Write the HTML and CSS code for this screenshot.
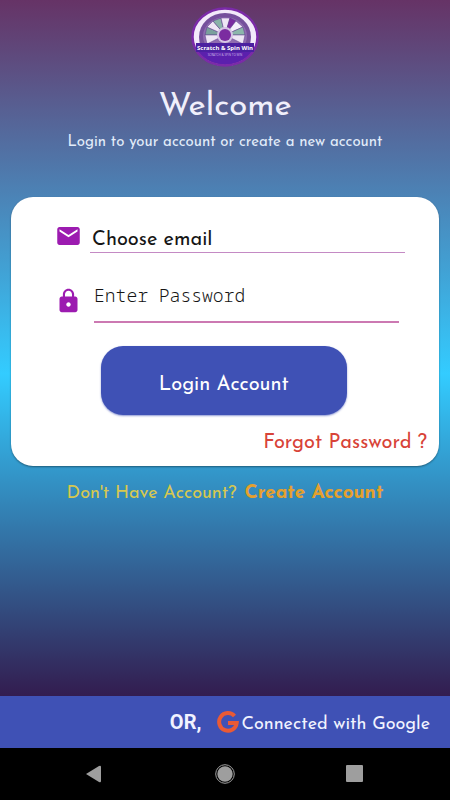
FILE: index.html
```html
<!DOCTYPE html>
<html lang="en">
<head>
<meta charset="utf-8">
<meta name="viewport" content="width=device-width, initial-scale=1">
<title>Scratch &amp; Spin Win</title>
<link rel="stylesheet" href="styles.css">
</head>
<body>
<div class="screen">
  <main class="content">
    <header class="intro">
      <svg class="logo" viewBox="0 0 68 60" role="img" aria-label="Scratch &amp; Spin Win">
        <defs><clipPath id="badge"><ellipse cx="34" cy="30" rx="32" ry="28"/></clipPath></defs>
        <ellipse cx="34" cy="30" rx="33" ry="29" fill="#f2eafa"/>
        <ellipse cx="34" cy="30" rx="26" ry="24" fill="#75509c"/>
        <ellipse cx="34" cy="29" rx="22" ry="19" fill="#8f6cb0"/>
        <g stroke="#5d3b8c" stroke-width=".5">
          <path d="M34 28 14 28 16 20Z" fill="#7aa09c"/>
          <path d="M34 28 16 20 22 14Z" fill="#eee6f5"/>
          <path d="M34 28 22 14 30 11Z" fill="#89b3a8"/>
          <path d="M34 28 30 11 39 11Z" fill="#eee6f5"/>
          <path d="M34 28 39 11 45 14Z" fill="#7b2ca0"/>
          <path d="M34 28 45 14 52 20Z" fill="#f5effa"/>
          <path d="M34 28 52 20 54 28Z" fill="#8cb6ab"/>
          <path d="M34 28 54 28 52 37Z" fill="#eee6f5"/>
          <path d="M34 28 14 28 16 37Z" fill="#eee6f5"/>
        </g>
        <circle cx="34" cy="28" r="8" fill="#d5c4e5"/>
        <circle cx="34" cy="28" r="6" fill="#7b2ca0"/>
        <path d="M5 36H63V45H5Z" fill="#4b20a0"/>
        <path d="M5 45H63L48 60H20Z" fill="#5b20ad" clip-path="url(#badge)"/>
        <ellipse cx="34" cy="30" rx="32.500" ry="28.500" fill="none" stroke="#7b2aa8" stroke-width="2.500"/>
        <path d="M5 36H63V45H5Z" fill="#4b20a0"/>
        <text class="logo-name" x="34" y="43" text-anchor="middle">Scratch &amp; Spin Win</text>
        <text class="logo-tagline" x="34" y="49" text-anchor="middle">SCRATCH &amp; SPIN TO WIN</text>
      </svg>
      <h1 class="title">Welcome</h1>
      <p class="subtitle">Login to your account or create a new account</p>
    </header>
    <form class="card">
      <div class="field">
        <label for="email" aria-label="Email"><svg class="icon" viewBox="0 0 24 24"><path d="M20 4H4c-1.100 0-2 .9-2 2v12c0 1.100.9 2 2 2h16c1.100 0 2-.9 2-2V6c0-1.100-.9-2-2-2zm0 4-8 5-8-5V6l8 5 8-5v2z"/></svg></label>
        <input class="input" id="email" type="email" placeholder="Choose email">
      </div>
      <div class="field field-password">
        <label for="password" aria-label="Password"><svg class="icon icon-lock" viewBox="0 0 24 24"><path d="M18 8h-1V6c0-2.760-2.240-5-5-5S7 3.240 7 6v2H6c-1.100 0-2 .9-2 2v10c0 1.100.9 2 2 2h12c1.100 0 2-.9 2-2V10c0-1.100-.9-2-2-2zm-6 9c-1.100 0-2-.9-2-2s.9-2 2-2 2 .9 2 2-.9 2-2 2zm3.100-9H8.900V6c0-1.710 1.390-3.100 3.100-3.100s3.100 1.390 3.100 3.100v2z"/></svg></label>
        <input class="input input-password" id="password" type="password" placeholder="Enter Password">
      </div>
      <button class="login" type="submit">Login Account</button>
      <a class="forgot" href="#">Forgot Password ?</a>
    </form>
    <p class="signup">Don't Have Account? <a class="create" href="#">Create Account</a></p>
  </main>
  <div class="social">
    <span class="or">OR,</span>
    <a class="google" href="#"><svg class="google-icon" viewBox="0 0 22 22"><path d="M17.500 5A8.800 8.800 0 1 0 19.700 12H11" fill="none" stroke="#ea5a35" stroke-width="4"/></svg><span class="google-label">Connected with Google</span></a>
  </div>
  <nav class="system">
    <button class="key" aria-label="Back"><svg viewBox="0 0 20 20"><path d="M1 10 14 2Q16 1 16 3V17Q16 19 14 18Z"/></svg></button>
    <button class="key" aria-label="Home"><svg viewBox="0 0 20 20"><circle cx="10" cy="10" r="7.700"/><circle cx="10" cy="10" r="9.300" fill="none" stroke="#9e9e9e"/></svg></button>
    <button class="key" aria-label="Recent apps"><svg viewBox="0 0 20 20"><rect x="1" y="1" width="17" height="17" rx="1"/></svg></button>
  </nav>
</div>
</body>
</html>
```
FILE: styles.css
```css
* { box-sizing: border-box; }

body {
  margin: 0;
  font-family: "Josefin Sans", Lato, sans-serif;
  background: #000;
}

a { text-decoration: none; }

button {
  border: 0;
  font-family: inherit;
}

.screen {
  display: flex;
  flex-direction: column;
  min-height: 100vh;
  background: linear-gradient(#663366, #33ccff 50%, #330033) 0 0 / 100% calc(100% - 52px) no-repeat #000;
}

.content {
  flex: 1;
  padding: 7px 11px 0;
}

.intro {
  display: flex;
  flex-direction: column;
  align-items: center;
  height: 190px;
}

.logo {
  width: 68px;
  height: 60px;
}

.logo-name {
  font: bold 6px "Open Sans", sans-serif;
  fill: #fff;
}

.logo-tagline {
  font: 3px "Open Sans", sans-serif;
  fill: #cdbbe8;
}

.title {
  margin: 22px 0 0;
  font-size: 33px;
  line-height: 36px;
  font-weight: 400;
  color: #f0effb;
}

.subtitle {
  margin: 8px 0 0;
  font-size: 15px;
  line-height: 20px;
  color: #e3edfa;
}

.card {
  display: flex;
  flex-direction: column;
  padding: 20px 12px 12px 44px;
  border-radius: 22px;
  background: #fff;
  box-shadow: 0 1px 2px rgba(0, 0, 0, 0.4);
}

.field {
  display: flex;
  align-items: flex-start;
  gap: 8px;
  height: 36px;
  padding-right: 22px;
}

.field-password {
  margin-top: 32px;
  padding-right: 28px;
  gap: 12px;
}

.icon {
  display: block;
  width: 27px;
  height: 38px;
  fill: #9c1bb0;
}

.icon-lock {
  height: 32px;
}

.input {
  flex: 1;
  min-width: 0;
  height: 36px;
  padding: 10px 2px 0;
  border: 0;
  border-bottom: 1px solid #c48ac4;
  border-radius: 0;
  outline: 0;
  background: none;
  font-family: inherit;
  font-size: 20px;
}

.input::placeholder {
  color: #151515;
  opacity: 1;
}

.input-password {
  height: 38px;
  padding: 0 0 16px;
  border-bottom: 2px solid #cc79b2;
  font-family: "Noto Sans Mono", "DejaVu Sans Mono", monospace;
  font-weight: 300;
  font-size: 18px;
}

.login {
  width: 66%;
  height: 69px;
  margin: 25px 0 0 46px;
  border-radius: 22px;
  background: #3f51b5;
  box-shadow: 0 1px 2px rgba(63, 81, 181, 0.6);
  color: #fff;
  font-size: 20px;
  padding: 8px 0 0;
}

.forgot {
  align-self: flex-end;
  margin-top: 17px;
  font-size: 20px;
  line-height: 22px;
  color: #d84338;
}

.signup {
  display: flex;
  justify-content: center;
  align-items: center;
  gap: 8px;
  margin: 14px 0 0;
  font-size: 18px;
  line-height: 28px;
  color: #d7c84f;
}

.create {
  font-size: 19px;
  font-weight: 700;
  color: #e5a02e;
}

.social {
  display: flex;
  align-items: center;
  justify-content: flex-end;
  gap: 16px;
  height: 52px;
  padding-right: 20px;
  background: #3f51b5;
  color: #f1f3ff;
}

.or {
  font-family: Roboto, sans-serif;
  font-size: 20px;
  font-weight: 700;
}

.google {
  display: flex;
  align-items: center;
  gap: 2px;
  color: inherit;
  font-size: 18px;
}

.google-label {
  padding-top: 6px;
}

.google-icon {
  width: 22px;
  height: 22px;
}

.system {
  display: flex;
  justify-content: space-between;
  align-items: center;
  height: 52px;
  padding: 0 85px;
  background: #000;
}

.key {
  width: 20px;
  height: 20px;
  padding: 0;
  background: none;
}

.key svg {
  display: block;
  width: 20px;
  height: 20px;
  fill: #9e9e9e;
}
```
